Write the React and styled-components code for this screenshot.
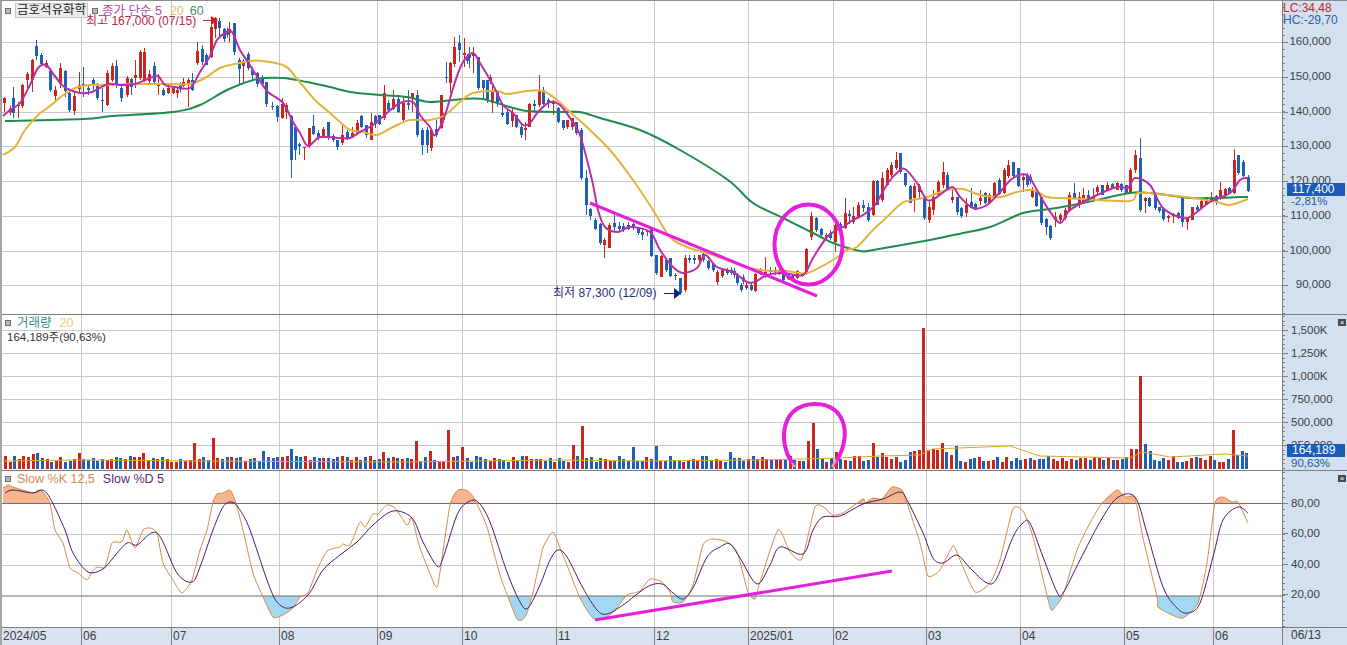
import React from "react";
import styled, { createGlobalStyle } from "styled-components";

const GlobalStyle = createGlobalStyle`
  html, body {
    margin: 0;
    background: #fff;
    overflow: hidden;
  }
`;

const FONT = `"Liberation Sans", "Noto Sans CJK KR", sans-serif`;
const RED = "#c9271d";
const BLUE = "#2060b4";
const MAGENTA = "#e61fdc";
const PLOT_W = 1280;
const MONTHS = [81.5, 171.5, 279.5, 377.5, 462.5, 556.5, 654.5, 748.5, 833.5, 926.5, 1020.5, 1124.5, 1213.5];

const MA5 = "3,116 10,110 20,103 30,85 38,68 46,65 54,75 62,85 70,90 80,93 92,92 108,84 120,85 135,84 150,78 158,76 165,85 175,87 190,88 200,72 210,56 217,40 225,33 232,32 240,50 248,62 258,78 268,92 283,103 293,122 300,133 308,146 320,137 340,138 350,138 360,132 373,125 387,113 400,103 413,102 420,115 430,127 435,135 445,115 455,82 463,62 473,53 480,63 493,85 503,105 513,113 523,125 530,123 538,112 550,102 560,105 570,118 580,135 592,180 598,210 605,227 618,232 630,227 650,232 660,250 673,267 683,273 697,268 705,255 717,267 733,272 747,282 755,282 767,275 783,273 803,275 813,258 827,237 837,230 843,227 853,220 863,215 875,205 888,183 898,172 905,169 917,183 927,200 937,197 952,187 960,197 973,208 987,205 1000,192 1013,178 1027,175 1037,190 1047,207 1060,223 1070,210 1093,197 1117,187 1128,188 1135,178 1150,185 1163,208 1183,218 1193,215 1210,202 1230,193 1240,180 1248,178";
const MA20 = "3,155 15,147 25,130 38,115 50,106 62,96 75,88 90,85 110,85 130,84 150,84 170,84 190,84 205,78 220,68 235,64 250,61 262,61 285,66 298,80 315,100 330,113 340,122 350,130 363,132 377,135 393,127 410,120 430,120 445,115 460,102 473,93 497,91 507,94 527,91 543,91 557,100 570,112 590,130 610,150 633,180 653,210 670,237 687,247 713,255 740,265 760,270 787,271 807,273 833,260 847,250 857,247 873,230 887,217 902,203 913,200 927,197 947,190 963,189 980,195 1000,197 1017,192 1033,190 1047,197 1063,198 1083,199 1130,201 1138,193 1167,195 1193,198 1217,202 1230,205 1248,199";
const MA60 = "5,121 83,119 113,116 173,112 200,105 227,90 257,79 283,78 307,82 330,87 350,92 380,95 407,97 430,102 463,99 483,99 503,105 527,111 563,112 580,112 600,118 640,130 680,150 728,180 753,203 783,218 817,235 833,243 860,251 873,250 930,240 963,233 990,227 1023,213 1050,209 1083,203 1130,193 1150,193 1167,195 1190,198 1220,198 1240,197 1248,197";
const VOL_AVG = "3,461 80,460 200,461 400,462 560,460 640,461 760,460 840,458 880,456 920,455 932,449 1010,446 1040,456 1130,458 1142,452 1170,457 1225,454 1248,456";
const SLOW_K = "3,488 8,485 13,487 33,493 38,490 43,492 50,503 55,530 63,543 70,568 78,573 87,580 92,572 97,567 105,567 112,543 122,542 127,530 135,548 143,530 150,528 157,533 163,563 173,580 182,593 192,580 200,550 207,530 213,502 217,494 223,493 230,490 235,500 243,530 253,573 263,597 273,617 283,615 293,608 300,597 308,593 317,570 327,551 340,547 343,544 350,545 360,522 365,527 373,514 378,514 387,505 395,508 407,525 412,518 420,548 436,587 440,572 450,505 458,490 468,491 475,500 487,527 500,575 510,602 517,619 522,620 527,613 533,592 543,548 553,532 560,548 567,565 580,598 593,618 607,617 617,608 627,595 640,591 650,579 662,582 670,592 673,602 683,602 693,585 703,545 713,539 727,542 737,552 748,592 755,599 760,582 778,530 790,552 802,559 815,507 825,508 832,515 843,513 863,499 865,503 873,498 882,499 892,487 902,490 907,503 920,543 928,576 940,570 953,546 960,560 975,592 990,583 1000,560 1013,509 1023,511 1033,537 1050,607 1055,607 1063,595 1077,550 1090,523 1102,503 1117,490 1125,497 1135,498 1143,538 1157,597 1158,607 1170,614 1183,618 1198,603 1207,563 1215,503 1223,497 1232,502 1238,502 1248,523";
const SLOW_D = "5,493 13,490 33,493 42,490 50,498 65,530 73,553 88,572 103,569 113,558 127,543 137,545 157,533 177,573 192,582 200,567 213,530 223,507 232,502 240,510 250,530 267,580 277,602 290,608 308,595 323,570 340,555 357,542 373,525 393,511 412,518 423,542 437,566 443,558 457,515 468,502 478,502 490,522 507,572 520,602 528,608 540,585 550,560 558,550 567,557 583,588 597,610 607,614 623,605 647,587 662,584 673,593 683,599 693,588 707,557 720,547 730,544 740,558 757,584 770,565 780,547 803,554 813,530 823,517 840,516 863,504 883,499 900,492 907,500 923,533 933,558 943,563 957,555 970,568 987,583 997,578 1013,537 1023,523 1030,523 1043,557 1057,592 1063,593 1080,560 1100,522 1117,498 1135,497 1147,533 1163,587 1177,608 1188,613 1200,603 1213,557 1223,520 1238,507 1248,513";

// x, wick top, body top, body bottom, wick bottom, colour
const CANDLES = [
  [4,97,98,103,112,"r"],[13,87,98,113,118,"b"],[18,102,105,106,118,"r"],[22,84,85,106,108,"r"],[27,72,74,80,90,"r"],
  [32,59,60,80,92,"r"],[36,40,46,56,60,"b"],[41,53,55,64,66,"b"],[46,60,63,67,68,"r"],[50,68,71,90,92,"b"],
  [55,86,90,96,102,"r"],[60,63,68,84,88,"r"],[65,70,71,91,97,"b"],[69,91,93,110,112,"b"],[74,92,96,111,115,"r"],
  [79,72,85,89,92,"r"],[83,67,84,85,97,"b"],[88,84,88,90,95,"b"],[93,78,80,85,90,"b"],[97,83,86,98,100,"b"],
  [102,88,100,101,112,"b"],[107,70,73,105,106,"r"],[112,63,66,80,82,"r"],[116,60,66,85,88,"b"],[121,85,88,98,102,"b"],
  [127,76,78,95,97,"r"],[131,78,79,87,95,"b"],[135,60,75,78,88,"r"],[140,50,52,78,80,"r"],[144,48,52,80,82,"r"],
  [149,70,74,81,84,"r"],[154,62,66,82,84,"b"],[158,74,84,86,95,"r"],[163,88,90,95,96,"b"],[168,83,88,93,94,"r"],
  [173,87,88,93,94,"r"],[177,88,90,93,98,"r"],[183,78,82,86,87,"r"],[188,78,80,84,107,"r"],[192,73,80,90,91,"b"],
  [197,42,51,63,65,"r"],[202,45,49,62,65,"b"],[206,53,55,65,65,"b"],[211,25,27,57,58,"r"],[215,17,18,29,38,"r"],
  [219,18,21,28,37,"b"],[224,28,29,39,42,"b"],[229,22,29,33,42,"r"],[234,23,23,52,55,"b"],[239,58,60,69,84,"b"],
  [243,59,61,66,82,"r"],[248,52,54,68,70,"b"],[252,67,70,75,80,"b"],[257,72,73,84,87,"b"],[262,75,77,84,86,"b"],
  [266,82,82,104,107,"b"],[272,102,106,107,110,"b"],[277,105,106,117,122,"b"],[282,98,104,118,119,"r"],[286,103,105,112,119,"r"],
  [291,115,116,160,178,"b"],[295,127,127,150,160,"b"],[299,143,144,146,155,"b"],[304,147,147,148,160,"r"],[309,128,128,146,148,"r"],
  [313,115,126,134,135,"b"],[318,130,133,138,140,"b"],[323,127,129,136,138,"r"],[328,122,122,138,140,"b"],[333,134,136,140,142,"b"],
  [337,140,140,147,150,"b"],[342,125,135,143,145,"r"],[347,130,132,138,140,"b"],[352,127,133,137,138,"r"],[357,120,123,133,135,"r"],
  [361,115,116,127,128,"b"],[366,125,125,135,138,"b"],[371,113,122,140,140,"r"],[375,115,116,124,128,"b"],[379,115,115,124,125,"b"],
  [384,85,93,118,120,"r"],[388,100,103,110,113,"b"],[393,90,99,109,110,"r"],[398,95,99,112,113,"b"],[403,97,103,120,122,"r"],
  [408,90,103,105,110,"b"],[412,93,93,99,112,"r"],[417,90,95,135,137,"b"],[422,128,130,145,155,"b"],[427,127,130,145,153,"b"],
  [431,130,130,148,151,"r"],[436,120,129,135,137,"b"],[441,95,95,128,129,"r"],[446,62,77,78,83,"b"],[450,62,63,83,93,"r"],
  [454,37,47,64,67,"r"],[459,35,43,50,62,"b"],[464,38,53,55,67,"r"],[469,47,55,58,68,"b"],[473,47,53,56,73,"r"],
  [478,57,57,88,90,"b"],[483,80,80,88,100,"b"],[487,80,80,100,103,"b"],[492,85,90,103,113,"r"],[497,92,92,103,107,"b"],
  [502,103,113,115,117,"b"],[507,110,112,124,125,"b"],[512,108,112,121,127,"r"],[516,115,115,127,128,"b"],[521,125,127,135,138,"b"],
  [525,122,128,130,140,"r"],[529,103,104,127,127,"r"],[534,100,104,106,113,"b"],[539,75,90,105,107,"r"],[543,87,90,104,105,"b"],
  [548,98,100,103,108,"b"],[553,100,101,104,115,"r"],[558,107,108,122,123,"b"],[563,120,120,128,130,"b"],[567,120,120,127,129,"r"],
  [572,118,118,127,130,"r"],[576,122,122,133,135,"b"],[581,128,130,178,180,"b"],[586,170,178,205,215,"b"],[590,208,209,216,220,"b"],
  [595,218,220,229,230,"b"],[600,223,224,243,245,"b"],[604,238,240,245,258,"r"],[609,223,225,248,248,"r"],[614,215,223,227,232,"b"],
  [619,222,226,229,232,"b"],[623,223,226,229,232,"b"],[628,222,225,229,230,"b"],[633,223,224,228,230,"b"],[638,227,228,233,235,"b"],
  [642,230,232,235,240,"b"],[647,230,231,232,236,"r"],[651,228,229,256,257,"b"],[656,255,255,273,275,"b"],[661,255,256,277,277,"r"],
  [666,260,260,270,272,"b"],[670,258,258,276,277,"b"],[675,273,275,276,280,"b"],[680,278,278,293,295,"b"],[685,255,258,290,292,"r"],
  [689,255,258,260,263,"b"],[694,255,258,260,264,"b"],[699,255,255,260,262,"r"],[703,253,254,260,262,"b"],[708,260,261,268,270,"b"],
  [713,263,264,270,272,"b"],[717,270,272,282,285,"r"],[722,268,270,276,278,"r"],[727,268,271,273,275,"b"],[731,267,270,273,275,"b"],
  [737,273,275,283,285,"b"],[741,283,285,290,292,"b"],[746,283,285,288,290,"r"],[751,283,285,290,291,"b"],[755,273,274,291,292,"r"],
  [760,268,270,272,275,"r"],[765,257,272,274,278,"r"],[770,267,270,272,275,"b"],[775,267,270,272,275,"r"],[779,268,271,273,275,"r"],
  [783,270,272,280,281,"b"],[788,275,276,279,280,"r"],[792,275,276,278,279,"b"],[797,270,271,278,279,"r"],[802,273,274,276,277,"b"],
  [806,248,249,273,275,"r"],[811,212,216,237,240,"r"],[816,217,218,230,232,"b"],[821,228,229,235,236,"b"],[826,233,235,238,240,"r"],
  [830,230,233,238,240,"b"],[835,220,225,242,252,"r"],[840,222,224,230,231,"b"],[845,198,213,228,229,"r"],[849,210,214,216,224,"b"],
  [853,207,216,222,224,"r"],[858,202,205,218,218,"r"],[863,200,205,208,212,"b"],[868,203,207,220,222,"b"],[873,180,181,215,216,"r"],
  [877,180,181,205,205,"b"],[882,172,178,200,202,"r"],[887,168,170,185,186,"r"],[891,162,165,175,177,"r"],[896,152,160,168,170,"r"],
  [900,153,153,172,174,"b"],[905,173,173,185,187,"b"],[910,185,186,203,203,"b"],[914,183,186,198,212,"r"],[919,184,186,192,198,"r"],
  [924,197,197,218,220,"b"],[929,200,207,220,223,"r"],[933,190,197,210,215,"r"],[938,180,182,195,197,"r"],[943,162,172,185,188,"r"],
  [947,172,175,190,190,"b"],[952,188,197,200,203,"r"],[957,197,197,212,215,"b"],[961,207,208,216,218,"b"],[966,198,205,213,217,"r"],
  [971,188,202,208,208,"b"],[975,203,204,210,210,"b"],[980,190,198,201,205,"r"],[985,192,193,203,204,"b"],[989,193,195,203,204,"r"],
  [994,182,183,196,197,"r"],[999,178,180,194,195,"b"],[1004,168,170,193,194,"r"],[1008,160,165,176,178,"r"],[1013,162,162,176,177,"b"],
  [1018,168,168,186,187,"b"],[1023,173,177,180,192,"r"],[1027,173,176,185,187,"b"],[1032,187,190,197,198,"r"],[1036,190,191,206,207,"b"],
  [1041,197,197,223,225,"b"],[1046,218,219,227,235,"b"],[1050,225,226,238,240,"b"],[1055,212,217,220,227,"r"],[1060,213,215,220,222,"r"],
  [1065,208,210,218,220,"r"],[1069,192,195,211,212,"r"],[1074,183,193,198,198,"b"],[1079,192,197,205,208,"r"],[1083,188,195,203,204,"r"],
  [1088,190,195,200,202,"b"],[1093,188,197,199,202,"r"],[1097,185,187,192,195,"r"],[1102,185,185,195,195,"b"],[1107,182,185,190,190,"r"],
  [1112,183,184,188,189,"b"],[1117,182,183,190,190,"r"],[1121,183,184,190,192,"b"],[1126,185,185,193,193,"b"],[1130,168,170,193,194,"r"],
  [1135,150,155,170,173,"r"],[1140,138,158,210,212,"b"],[1145,197,198,201,213,"r"],[1149,197,198,206,207,"b"],[1155,195,195,208,210,"b"],
  [1159,207,207,211,213,"b"],[1163,208,209,219,221,"b"],[1168,215,216,218,222,"r"],[1173,213,215,216,223,"r"],[1178,212,213,218,219,"b"],
  [1182,197,197,222,227,"b"],[1187,217,218,222,230,"r"],[1192,207,207,220,220,"r"],[1197,205,207,210,212,"b"],[1201,200,201,208,208,"r"],
  [1206,197,197,205,205,"r"],[1211,192,197,200,202,"r"],[1216,195,196,202,205,"b"],[1220,182,190,198,200,"r"],[1225,188,189,196,197,"r"],
  [1229,187,188,193,194,"b"],[1234,149,160,193,194,"r"],[1238,155,155,173,175,"b"],[1243,160,162,176,177,"b"],[1248,175,177,191,192,"b"],
];

// bar tops that stand out from the usual 10-14px volume
const VOL_TOPS = {
  22: 456, 27: 457, 32: 454, 36: 453, 79: 453, 140: 457, 144: 453, 196: 443, 211: 438, 262: 451, 291: 449, 340: 456,
  384: 452, 417: 441, 446: 430, 431: 451, 464: 447, 572: 445, 581: 426, 632: 447, 656: 446, 731: 452, 806: 441, 811: 423,
  816: 449, 835: 452, 873: 443, 882: 453, 910: 452, 914: 451, 919: 450, 924: 328, 929: 450, 933: 449, 938: 450, 943: 443,
  947: 452, 952: 455, 957: 446, 1130: 449, 1135: 449, 1140: 376, 1145: 444, 1149: 451, 1234: 430, 1238: 455, 1243: 451, 1248: 453,
};

const parsePts = (s) => s.split(" ").map((p) => p.split(",").map(Number));
const rand = (i) => {
  const v = Math.sin(i * 12.9898) * 43758.5453;
  return v - Math.floor(v);
};

// catmull-rom through the points, so the averages don't look angular
const smooth = (s, k = 0.16) => {
  const p = parsePts(s);
  let d = `M${p[0][0]} ${p[0][1]}`;
  for (let i = 0; i < p.length - 1; i++) {
    const a = p[i - 1] || p[i];
    const b = p[i];
    const c = p[i + 1];
    const e = p[i + 2] || c;
    const x1 = b[0] + (c[0] - a[0]) * k;
    const y1 = b[1] + (c[1] - a[1]) * k;
    const x2 = c[0] - (e[0] - b[0]) * k;
    const y2 = c[1] - (e[1] - b[1]) * k;
    d += `C${x1.toFixed(1)} ${y1.toFixed(1)} ${x2.toFixed(1)} ${y2.toFixed(1)} ${c[0]} ${c[1]}`;
  }
  return d;
};

const ma5Pts = parsePts(MA5);
const ma5At = (x) => {
  for (let i = 1; i < ma5Pts.length; i++) {
    const [x0, y0] = ma5Pts[i - 1];
    const [x1, y1] = ma5Pts[i];
    if (x <= x1) return y0 + ((y1 - y0) * (x - x0)) / (x1 - x0);
  }
  return 178;
};

const bars = [];
for (let i = 0; i < 270; i++) {
  const x = 5 + i * 4.615;
  const hit = CANDLES.find((c) => Math.abs(c[0] - x) < 2.4);
  bars.push({ x, hit });
}
const allCandles = [...CANDLES];
bars.forEach(({ x, hit }, i) => {
  if (hit) return;
  const y = ma5At(x);
  allCandles.push([Math.round(x), y - 5, y - 2, y + 2, y + 5, i % 2 ? "r" : "b"]);
});

const Page = styled.div`
  display: grid;
  grid-template-rows: 313px 156px 157px 18px;
  width: 1347px;
  height: 645px;
  box-sizing: border-box;
  border-top: 1px solid #8c8c8c;
  border-left: 2px solid #a6a6a6;
  background: #fff;
  font-family: ${FONT};
`;

const Panel = styled.section`
  display: flex;
  min-height: 0;
  border-top: ${(p) => (p.$divided ? "1px solid #7f7f7f" : "0")};
`;

const Plot = styled.div`
  position: relative;
  width: ${PLOT_W}px;
  flex: none;
`;

const Chart = styled.svg`
  display: block;
  width: 100%;
  height: 100%;
  font-family: ${FONT};
  font-size: 12px;
`;

const DateStrip = styled(Chart)`
  background: #d9e2ee;
`;

const Axis = styled.div`
  position: relative;
  flex: 1;
  box-sizing: border-box;
  border-left: 1px solid #7f7f7f;
  background: #d3e0f0;
`;

const Scale = styled.svg`
  display: block;
  width: 100%;
  height: 100%;
  font-family: ${FONT};
  font-size: 11.5px;
  fill: #3d3d3d;
`;

const ScaleText = styled(Scale)`
  position: absolute;
  inset: 0;
`;

const Legend = styled.div`
  position: absolute;
  top: ${(p) => p.$top}px;
  left: 3px;
  display: flex;
  align-items: center;
  gap: 4px;
  font-size: 12.5px;
  line-height: 14px;
  white-space: nowrap;
`;

const Marker = styled.i`
  width: 4px;
  height: 4px;
  border: 1px solid #6f6f6f;
  background: #b9b9b9;
`;

const StockName = styled.span`
  padding: 0 1px;
  border: 1px solid #c6c6c6;
  background: #ececec;
  color: #222;
  line-height: 13px;
`;

const LegendText = styled.span`
  margin-left: ${(p) => p.$offset || 0}px;
  color: ${(p) => p.$color};
`;

const Note = styled.div`
  position: absolute;
  top: ${(p) => p.$top}px;
  left: 5px;
  font-size: 11.5px;
  line-height: 14px;
  color: #333;
  white-space: nowrap;
`;

const Tag = styled.div`
  position: absolute;
  top: ${(p) => p.$top}px;
  left: 4px;
  right: 2px;
  height: 13px;
  padding-left: 5px;
  background: #1b5cb9;
  color: #fff;
  font-size: 12px;
  line-height: 13px;
`;

const Close = styled.button`
  position: absolute;
  top: 4px;
  right: 1px;
  width: 8px;
  height: 7px;
  padding: 0;
  border: 0;
  background: #4a4a4a;
  color: #fff;
  font-size: 8px;
  line-height: 7px;
  text-align: center;
`;

const AxisInfo = styled.div`
  position: absolute;
  top: 1px;
  left: 0;
  font-size: 12px;
  line-height: 12px;
`;

const InfoLine = styled.div`
  color: ${(p) => p.$color};
`;

const EndDate = styled.div`
  padding-left: 8px;
  color: #3d3d3d;
  font-size: 12px;
  line-height: 14px;
`;

function GridLines({ rows, top, bottom }) {
  return (
    <g stroke="#c9c9c9" strokeWidth="1">
      {rows.map((y) => (
        <line key={y} x1="2" x2="1282" y1={y} y2={y} />
      ))}
      {MONTHS.map((x) => (
        <line key={x} x1={x} x2={x} y1={top} y2={bottom} />
      ))}
    </g>
  );
}

function AxisTicks({ ticks, step, top, height }) {
  const minor = [];
  for (let y = ticks[0] - step * 2; y < top + height; y += step / 5) {
    if (y > top) minor.push(y);
  }
  return (
    <Scale viewBox={`1283 ${top} 64 ${height}`}>
      <g stroke="#7f7f7f">
        {minor.map((y) => (
          <line key={y} x1="1283" x2="1285" y1={Math.round(y) + 0.5} y2={Math.round(y) + 0.5} />
        ))}
        {ticks.map((y) => (
          <line key={y} x1="1283" x2="1288" y1={Math.round(y) + 0.5} y2={Math.round(y) + 0.5} />
        ))}
      </g>
    </Scale>
  );
}

function AxisLabels({ labels, top, height, anchor = "start", x = 1291 }) {
  return (
    <ScaleText viewBox={`1283 ${top} 64 ${height}`}>
      {labels.map(([text, y, color]) => (
        <text key={text} x={x} y={y + 4} textAnchor={anchor} fill={color}>
          {text}
        </text>
      ))}
    </ScaleText>
  );
}

function Candle({ c }) {
  const [x, wt, bt, bb, wb, kind] = c;
  return (
    <g fill={kind === "r" ? RED : BLUE}>
      <rect x={x} y={wt} width="1" height={wb - wt} />
      <rect x={x - 1} y={bt} width="3" height={Math.max(bb - bt, 1)} />
    </g>
  );
}

function PricePanel() {
  return (
    <Panel>
      <Plot>
        <Chart viewBox={`2 1 ${PLOT_W} 313`}>
          <GridLines rows={[42.5, 77.5, 112.5, 146.5, 181.5, 216.5, 251.5, 285.5]} top={1} bottom={314} />
          {allCandles.map((c, i) => (
            <Candle key={i} c={c} />
          ))}
          <g fill="none" strokeWidth="2" strokeLinejoin="round">
            <path d={smooth(MA60)} stroke="#1f8b4d" />
            <path d={smooth(MA20)} stroke="#e4b33c" />
            <path d={smooth(MA5)} stroke="#bb2fa6" />
          </g>
          <text x="86" y="25" fill="#b32a3f">최고 167,000 (07/15)</text>
          <path d="M203 20.5h9" stroke="#b32a3f" />
          <path d="M211 16l7 4.5-7 4.5z" fill="#d4191d" />
          <text x="553" y="297" fill="#1f2f7a">최저 87,300 (12/09)</text>
          <path d="M664 293.5h11" stroke="#10207f" />
          <path d="M674 288l7 5.5-7 5.5z" fill="#10207f" />
          <line x1="590" y1="203" x2="817" y2="296" stroke={MAGENTA} strokeWidth="3" />
          <ellipse cx="808.5" cy="244.5" rx="34" ry="40" fill="none" stroke={MAGENTA} strokeWidth="4" />
        </Chart>
        <Legend $top={2}>
          <Marker />
          <StockName>금호석유화학</StockName>
          <Marker />
          <LegendText $color="#b04aa8">종가 단순 5</LegendText>
          <LegendText $color="#e0c060" $offset={4}>20</LegendText>
          <LegendText $color="#3f8f5f" $offset={2}>60</LegendText>
        </Legend>
      </Plot>
      <Axis>
        <AxisTicks ticks={[42, 77, 112, 146, 181, 216, 251, 285]} step={34.7} top={1} height={313} />
        <AxisLabels
          top={1}
          height={313}
          anchor="end"
          x={1331}
          labels={[
            ["160,000", 41], ["150,000", 76], ["140,000", 111], ["130,000", 145],
            ["120,000", 180], ["110,000", 215], ["100,000", 250], ["90,000", 284],
          ]}
        />
        <AxisLabels top={1} height={313} labels={[["-2,81%", 201, "#27579b"]]} />
        <AxisInfo>
          <InfoLine $color="#c22a2a">LC:34,48</InfoLine>
          <InfoLine $color="#2a62a8">HC:-29,70</InfoLine>
        </AxisInfo>
        <Tag $top={182}>117,400</Tag>
      </Axis>
    </Panel>
  );
}

function VolumePanel() {
  return (
    <Panel $divided>
      <Plot>
        <Chart viewBox={`2 315 ${PLOT_W} 155`}>
          <GridLines rows={[330.5, 353.5, 376.5, 399.5, 422.5, 445.5]} top={315} bottom={470} />
          {bars.map(({ x }, i) => {
            const near = Object.keys(VOL_TOPS).find((k) => Math.abs(k - x) < 2.4);
            const candle = allCandles.find((c) => Math.abs(c[0] - x) < 2.4);
            const top = near ? VOL_TOPS[near] : Math.round(456 + rand(i) * 6);
            const tallRed = near && top < 445 && near !== "1145";
            const isRed = tallRed || (candle && candle[5] === "r" && near !== "1145");
            return (
              <rect
                key={i}
                x={Math.round(x) - 1}
                y={top}
                width="3"
                height={469 - top}
                fill={isRed ? RED : BLUE}
              />
            );
          })}
          <polyline points={VOL_AVG} fill="none" stroke="#dfa428" strokeWidth="1" />
          <path d="M795 466C778 448 778 405 814 404C848 403 853 440 833 466" fill="none" stroke={MAGENTA} strokeWidth="4" />
          <path d="M792 463l3 4M832 467l4-7" stroke="#f0b860" strokeWidth="2" fill="none" />
        </Chart>
        <Legend $top={1}>
          <Marker />
          <LegendText $color="#2f8f8f" $offset={2}>거래량</LegendText>
          <LegendText $color="#e6d070" $offset={4}>20</LegendText>
        </Legend>
        <Note $top={15}>164,189주(90,63%)</Note>
      </Plot>
      <Axis>
        <AxisTicks ticks={[330, 353, 376, 399, 422, 445]} step={23} top={315} height={155} />
        <AxisLabels
          top={315}
          height={155}
          labels={[
            ["1,500K", 330], ["1,250K", 353], ["1,000K", 376], ["750,000", 399],
            ["500,000", 422], ["250,000", 445], ["90,63%", 463, "#27579b"],
          ]}
        />
        <Close aria-label="닫기">×</Close>
        <Tag $top={129}>164,189</Tag>
      </Axis>
    </Panel>
  );
}

function SlowPanel() {
  const kPts = parsePts(SLOW_K);
  const kLine = smooth(SLOW_K, 0.1);
  const last = kPts[kPts.length - 1][0];
  const closed = (base) => `${kLine}L${last} ${base}L${kPts[0][0]} ${base}Z`;
  return (
    <Panel $divided>
      <Plot>
        <Chart viewBox={`2 471 ${PLOT_W} 156`}>
          <defs>
            <clipPath id="overbought">
              <rect x="0" y="471" width="1282" height="32.5" />
            </clipPath>
            <clipPath id="oversold">
              <rect x="0" y="596" width="1282" height="31" />
            </clipPath>
          </defs>
          <GridLines rows={[534.5, 565.5]} top={471} bottom={627} />
          <path d={closed(503.5)} fill="#f6b48f" clipPath="url(#overbought)" />
          <path d={closed(596)} fill="#a3d8f2" clipPath="url(#oversold)" />
          <g stroke="#6f6f6f">
            <line x1="2" x2="1282" y1="503.5" y2="503.5" />
            <line x1="2" x2="1282" y1="596" y2="596" />
          </g>
          <path d={kLine} fill="none" stroke="#d58a43" strokeWidth="1" />
          <path d={smooth(SLOW_D)} fill="none" stroke="#4d1a66" strokeWidth="1" />
          <line x1="595" y1="620" x2="892" y2="571" stroke={MAGENTA} strokeWidth="3" />
        </Chart>
        <Legend $top={1}>
          <Marker />
          <LegendText $color="#d08a50" $offset={2}>Slow %K 12,5</LegendText>
          <LegendText $color="#5a2a78" $offset={4}>Slow %D 5</LegendText>
        </Legend>
      </Plot>
      <Axis>
        <AxisTicks ticks={[503, 533, 564, 594]} step={30.7} top={471} height={156} />
        <AxisLabels
          top={471}
          height={156}
          labels={[["80,00", 503], ["60,00", 533], ["40,00", 564], ["20,00", 594]]}
        />
        <Close aria-label="닫기">×</Close>
      </Axis>
    </Panel>
  );
}

function DatePanel() {
  const labels = ["06", "07", "08", "09", "10", "11", "12", "2025/01", "02", "03", "04", "05", "06"];
  return (
    <Panel $divided>
      <Plot>
        <DateStrip viewBox={`2 628 ${PLOT_W} 17`}>
          <text x="3" y="640" fill="#3d3d3d">2024/05</text>
          {MONTHS.map((x, i) => (
            <g key={x}>
              <line x1={x} x2={x} y1="628" y2="645" stroke="#7f7f7f" />
              <text x={x + 1.5} y="640" fill="#3d3d3d">{labels[i]}</text>
            </g>
          ))}
        </DateStrip>
      </Plot>
      <Axis>
        <EndDate>06/13</EndDate>
      </Axis>
    </Panel>
  );
}

export default function App() {
  return (
    <>
      <GlobalStyle />
      <Page>
        <PricePanel />
        <VolumePanel />
        <SlowPanel />
        <DatePanel />
      </Page>
    </>
  );
}
